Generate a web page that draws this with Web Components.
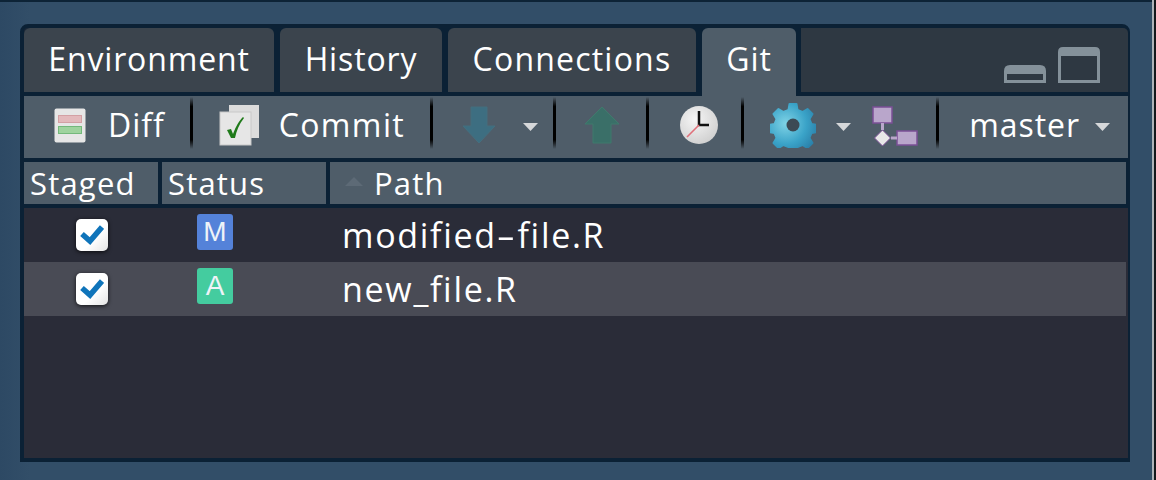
<!DOCTYPE html>
<html>
<head>
<meta charset="utf-8">
<style>
  html, body { margin: 0; height: 100%; overflow: hidden; }
  html { background: linear-gradient(90deg, #aeb4b9 1154px, #14181c 1154px); }
  body { font-family: "Open Sans", "Noto Sans", sans-serif; color: #fff; }
</style>
</head>
<body>
<git-window>
  <git-tabs>
    <git-tab style="--w:250px">Environment</git-tab>
    <git-tab style="--w:162px">History</git-tab>
    <git-tab style="--w:248px;--ls:1.2px">Connections</git-tab>
    <git-tab active style="--w:94px">Git</git-tab>
  </git-tabs>
  <git-toolbar></git-toolbar>
  <git-table>
    <git-row name="modified-file.R" status="M"></git-row>
    <git-row name="new_file.R" status="A" selected></git-row>
  </git-table>
</git-window>

<script>
class GitWindow extends HTMLElement {
  constructor() {
    super();
    this.attachShadow({ mode: 'open' });
    this.shadowRoot.innerHTML = `
      <style>
        :host { display: block; width: 1152px; height: 480px; box-sizing: border-box; border-top: 2px solid #0d2336;
          padding: 22px 22px 0 20px; background: linear-gradient(90deg, #2d4964 0, #324e68 30px); }
        .pane { height: 438px; box-sizing: border-box; background: #2a2c38; border: solid #0b2135;
          border-width: 4px 2px 4px 4px; border-radius: 8px 8px 0 0; }
      </style>
      <div class="pane"><slot></slot></div>
    `;
  }
}

class GitTabs extends HTMLElement {
  constructor() {
    super();
    this.attachShadow({ mode: 'open' });
    this.shadowRoot.innerHTML = `
      <style>
        :host { display: flex; height: 68px; background: #0b2135; border-radius: 5px 5px 0 0; }
        .tabs { display: flex; gap: 6px; }
        .rest { flex: 1; height: 64px; margin-left: 5px; background: #2e3842; border-radius: 0 5px 0 0;
          display: flex; align-items: flex-end; justify-content: flex-end; gap: 12px; padding: 0 28px 9px 0; box-sizing: border-box; }
        svg { display: block; }
      </style>
      <div class="tabs"><slot></slot></div>
      <div class="rest">
        <svg width="42" height="18" viewBox="0 0 42 18"><path fill="#84919a" fill-rule="evenodd" d="M0 18V6q0-6 6-6h30q6 0 6 6v12zM3 9v6h36V9z"/></svg>
        <svg width="42" height="36" viewBox="0 0 42 36"><path fill="#84919a" fill-rule="evenodd" d="M0 36V5q0-5 5-5h32q5 0 5 5v31zM3 9v24h36V9z"/></svg>
      </div>
    `;
  }
}

class GitTab extends HTMLElement {
  constructor() {
    super();
    this.attachShadow({ mode: 'open' });
    this.shadowRoot.innerHTML = `
      <style>
        :host { display: flex; box-sizing: border-box; width: var(--w); height: 64px; align-items: center; justify-content: center;
          background: #3b444d; border-radius: 6px 6px 0 0; font-size: 32px; letter-spacing: var(--ls, .85px); padding-bottom: 4px; }
        :host([active]) { background: #4f5d69; height: 68px; padding-bottom: 8px; }
      </style>
      <slot></slot>
    `;
  }
}

class GitToolbar extends HTMLElement {
  constructor() {
    super();
    this.attachShadow({ mode: 'open' });
    const sep = (ml) => `<i class="sep" style="margin-left:${ml}px"></i>`;
    const caret = (ml) => `<svg style="margin-left:${ml}px;margin-top:3px" width="15" height="8" viewBox="0 0 15 8"><path fill="#d6d8da" d="M0 0h15L7.5 8z"/></svg>`;
    this.shadowRoot.innerHTML = `
      <style>
        :host { display: flex; align-items: center; box-sizing: border-box; height: 62px; padding-bottom: 4px; background: #4f5d69; font-size: 32px; letter-spacing: .95px; }
        svg { display: block; flex: none; filter: blur(.4px); }
        span { flex: none; line-height: 40px; }
        .sep { flex: none; width: 3px; height: 52px; margin-top: -4px; background: linear-gradient(180deg, #4f5d69, #000 18%, #000 82%, #4f5d69); }
      </style>
      <svg style="margin-left:30px" width="33" height="35" viewBox="0 0 33 35">
        <rect x=".5" y=".5" width="31" height="34" rx="2" fill="#e6e6e6"/>
        <rect x="4.5" y="7.5" width="23" height="7" fill="#e3b9bc" stroke="#d3a0a4"/>
        <rect x="4.5" y="18.5" width="23" height="7" fill="#9ed39e" stroke="#73b87b"/>
      </svg>
      <span style="margin-left:21px">Diff</span>
      ${sep(25)}
      <svg style="margin-left:26px" width="41" height="42" viewBox="0 0 41 42">
        <rect x="10" y="1" width="30" height="33" fill="#dcdcdc"/>
        <rect x="1" y="8" width="31" height="33" fill="#e6e6e6" stroke="#c8c8c8"/>
        <path fill="#1f7a1a" d="M8 26l4-1 2 5C17 22 20 17 24 13l1 1C20 20 17.500 27 16 34h-4z"/>
      </svg>
      <span style="margin-left:19px;letter-spacing:1.4px">Commit</span>
      ${sep(25)}
      <svg style="margin-left:29px" width="34" height="38" viewBox="0 0 34 38"><path fill="#3d6e81" stroke="#456f7f" d="M9 1h16v19h8L17 37 1 20h8z"/></svg>
      ${caret(27)}
      ${sep(15)}
      <svg style="margin-left:28px" width="36" height="38" viewBox="0 0 36 38"><path fill="#3a6f68" stroke="#3f7a6c" d="M18 1l17 17h-8v19H9V18H1z"/></svg>
      ${sep(26)}
      <svg style="margin-left:30px" width="40" height="38" viewBox="0 0 40 38">
        <defs><radialGradient id="c" cx=".4" cy=".35" r=".7"><stop offset="0" stop-color="#f6f6f6"/><stop offset="1" stop-color="#cfcfcf"/></radialGradient></defs>
        <circle cx="20" cy="19" r="19" fill="url(#c)"/>
        <path fill="none" stroke="#111" stroke-width="2.5" d="M20 5v14h10"/>
        <path stroke="#e0707a" stroke-width="1.6" d="M20 19L8 31"/>
      </svg>
      ${sep(22)}
      <svg style="margin-left:26px" width="46" height="46" viewBox="0 0 46 46">
        <defs><radialGradient id="g" cx=".35" cy=".4" r=".7"><stop offset="0" stop-color="#7fd3e6"/><stop offset=".6" stop-color="#3aa3c8"/><stop offset="1" stop-color="#2a7fa8"/></radialGradient></defs>
        <path fill="url(#g)" stroke="url(#g)" stroke-width="2" stroke-linejoin="round" d="M19.500 2h7l1 6 5 2 5-3 5 5-3 5 2 5 6 1v7l-6 1-2 5 3 5-5 5-5-3-5 2-1 6h-7l-1-6-5-2-5 3-5-5 3-5-2-5-6-1v-7l6-1 2-5-3-5 5-5 5 3 5-2z"/>
        <circle cx="23" cy="23" r="6.500" fill="#3c4a55"/>
      </svg>
      ${caret(20)}
      <svg style="margin-left:21px" width="46" height="42" viewBox="0 0 46 42">
        <g fill="#b9a6cb" stroke="#7b4f96" stroke-width="1.5">
          <rect x="1" y="3" width="19" height="16"/>
          <rect x="25" y="27" width="20" height="14"/>
        </g>
        <path stroke="#b9a6cb" stroke-width="3" d="M10.500 19v7M19 34h6"/>
        <path fill="#e8e8e8" stroke="#7b4f96" stroke-width="1" d="M10.500 26l8 8-8 8-8-8z"/>
      </svg>
      ${sep(18)}
      <span style="margin-left:30px">master</span>
      ${caret(15)}
    `;
  }
}

class GitTable extends HTMLElement {
  constructor() {
    super();
    this.attachShadow({ mode: 'open' });
    this.shadowRoot.innerHTML = `
      <style>
        :host { display: block; }
        .head { display: grid; grid-template-columns: 134px 164px 1fr; gap: 4px; height: 50px; box-sizing: border-box;
          padding: 4px 0; background: #0b2135; font-size: 31px; letter-spacing: 1.2px; }
        .head div { background: #4f5d69; display: flex; align-items: center; padding-left: 6px; line-height: 1; }
        .head div:last-child { padding-left: 15px; margin-right: 2px; }
        svg { margin-right: 11px; margin-top: -4px; }
      </style>
      <div class="head">
        <div>Staged</div>
        <div>Status</div>
        <div><svg width="18" height="9" viewBox="0 0 18 9"><path fill="#5d6a76" d="M9 0l9 9H0z"/></svg>Path</div>
      </div>
      <slot></slot>
    `;
  }
}

class GitRow extends HTMLElement {
  static get observedAttributes() {
    return ['name', 'status'];
  }

  constructor() {
    super();
    this.attachShadow({ mode: 'open' });
  }

  connectedCallback() {
    this.render();
  }

  attributeChangedCallback() {
    this.render();
  }

  render() {
    const status = this.getAttribute('status') || '';
    const name = (this.getAttribute('name') || '').replace('-', '<span class="dash">-</span>');
    this.shadowRoot.innerHTML = `
      <style>
        :host { display: grid; grid-template-columns: 105px 201px 1fr; align-items: center; height: 54px; margin-right: 2px; font-size: 34px; letter-spacing: 1.7px; }
        :host([selected]) { background: #494b55; }
        .check { justify-self: end; margin-right: 21px; width: 32px; height: 32px; border-radius: 5px; background: linear-gradient(135deg, #fff 60%, #e4e4e4);
          box-shadow: 0 1px 4px rgba(0,0,0,.75); display: flex; align-items: center; justify-content: center; filter: blur(.4px); }
        .badge { width: 36px; height: 36px; margin: -7px 0 0 68px; border-radius: 3px; display: flex; align-items: center; justify-content: center;
          font: 28px "Liberation Sans", sans-serif; letter-spacing: 0; color: #eef3f8; background: #5482d9; }
        .badge.A { background: #44cc9f; }
        .name { padding-left: 12px; line-height: 1; white-space: nowrap; }
        .dash { display: inline-block; margin: 0 4px; transform: scaleX(1.7); }
      </style>
      <div class="check"><svg width="24" height="22" viewBox="0 0 24 22"><path fill="none" stroke="#0f74ba" stroke-width="5.500" d="M2 10l8 7L22 3"/></svg></div>
      <div class="badge ${status}">${status}</div>
      <div class="name">${name}</div>
    `;
  }
}

customElements.define('git-window', GitWindow);
customElements.define('git-tabs', GitTabs);
customElements.define('git-tab', GitTab);
customElements.define('git-toolbar', GitToolbar);
customElements.define('git-table', GitTable);
customElements.define('git-row', GitRow);
</script>
</body>
</html>
